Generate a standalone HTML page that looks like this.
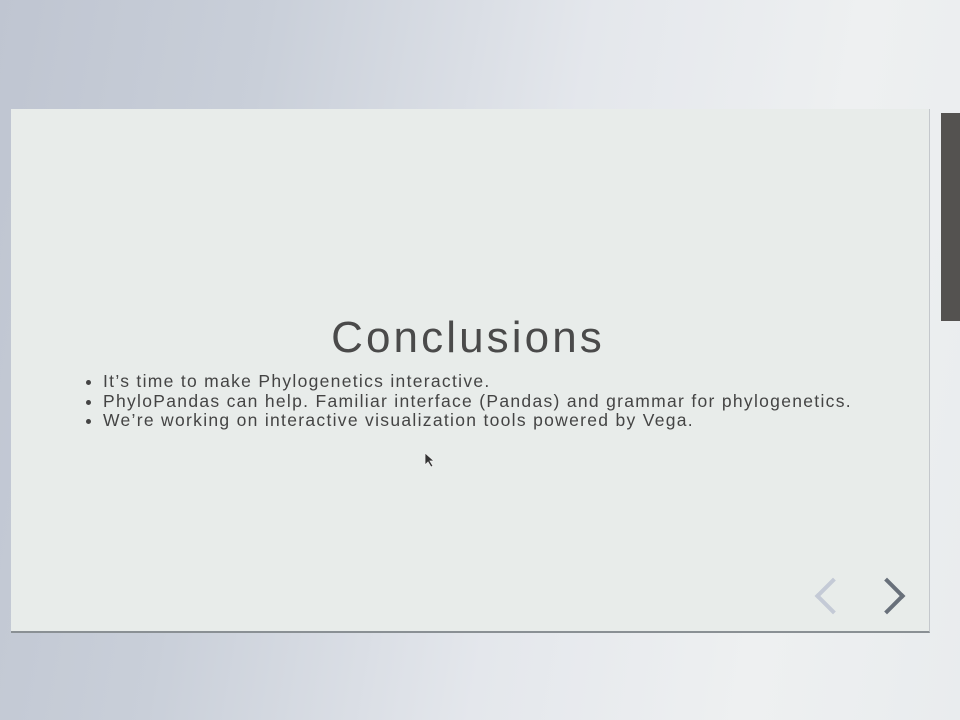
<!DOCTYPE html>
<html><head><style>
body{margin:0;width:960px;height:720px;overflow:hidden;position:relative;
background:linear-gradient(100deg,#bfc5d1 0%,#c9cfd9 25%,#e4e7ec 55%,#eef0f1 80%,#e9ecee 100%);
font-family:"Liberation Sans",sans-serif;}
.slide{position:absolute;left:11px;top:109px;width:918px;height:522px;background:#e8ecea;
border-bottom:2px solid #8a9094;border-right:1px solid #c4c8cc;}
.dark{position:absolute;left:941px;top:113px;width:19px;height:208px;background:#545250;}
h1{position:absolute;left:0;width:936px;top:313px;margin:0;text-align:center;font-weight:normal;font-size:44px;color:#4a4a4a;letter-spacing:3.1px}
ul{position:absolute;left:86px;top:372px;margin:0;padding:0 0 0 17px;font-size:17.5px;line-height:19.7px;color:#444;letter-spacing:1.3px}
.arr{position:absolute;top:583px;width:22px;height:22px;border-left:4px solid;border-bottom:4px solid}
</style></head><body>
<div class="slide"></div>
<div class="dark"></div>
<h1>Conclusions</h1>
<ul>
<li>It’s time to make Phylogenetics interactive.</li>
<li>PhyloPandas can help. Familiar interface (Pandas) and grammar for phylogenetics.</li>
<li>We’re working on interactive visualization tools powered by Vega.</li>
</ul>
<div class="arr" style="left:820px;border-color:#c4cad6;transform:rotate(45deg)"></div>
<div class="arr" style="left:874px;border-color:#68707a;transform:rotate(-135deg)"></div>
<svg style="position:absolute;left:424px;top:452px" width="12" height="16"><path d="M1 1 L1 13 L4 10 L7 15 L9 14 L6 9 L10 9 Z" fill="#333" stroke="#eee" stroke-width="0.8"/></svg>
</body></html>
